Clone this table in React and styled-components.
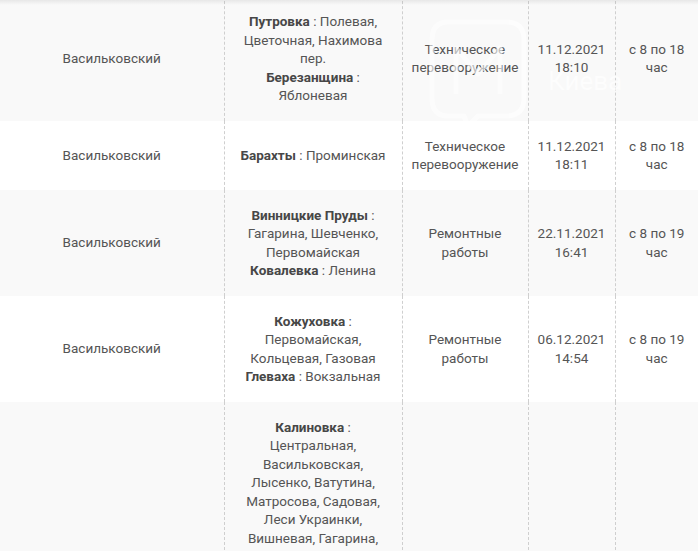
import React from 'react';
import styled, { createGlobalStyle } from 'styled-components';

const GlobalStyle = createGlobalStyle`
    html, body {
        margin: 0;
        padding: 0;
        background: #ffffff;
    }
    body {
        font-family: Roboto, "Liberation Sans", Arial, sans-serif;
        overflow: hidden;
    }
`

const rows = [
    {
        district: 'Васильковский',
        places: [
            { name: 'Путровка', streets: 'Полевая, Цветочная, Нахимова пер.' },
            { name: 'Березанщина', streets: 'Яблоневая' },
        ],
        reason: 'Техническое перевооружение',
        date: '11.12.2021 18:10',
        time: 'с 8 по 18 час',
    },
    {
        district: 'Васильковский',
        places: [{ name: 'Барахты', streets: 'Проминская' }],
        reason: 'Техническое перевооружение',
        date: '11.12.2021 18:11',
        time: 'с 8 по 18 час',
    },
    {
        district: 'Васильковский',
        places: [
            { name: 'Винницкие Пруды', streets: 'Гагарина, Шевченко, Первомайская' },
            { name: 'Ковалевка', streets: 'Ленина' },
        ],
        reason: 'Ремонтные работы',
        date: '22.11.2021 16:41',
        time: 'с 8 по 19 час',
    },
    {
        district: 'Васильковский',
        places: [
            { name: 'Кожуховка', streets: 'Первомайская, Кольцевая, Газовая' },
            { name: 'Глеваха', streets: 'Вокзальная' },
        ],
        reason: 'Ремонтные работы',
        date: '06.12.2021 14:54',
        time: 'с 8 по 19 час',
    },
    {
        district: 'Васильковский',
        places: [
            {
                name: 'Калиновка',
                streets:
                    'Центральная, Васильковская, Лысенко, Ватутина, Матросова, Садовая, Леси Украинки, Вишневая, Гагарина, Шевченко, Мира, Набережная, Лесная, Зелёная, Молодёжная, Садовый пер., Полевая, Весенняя, Луговая, Озёрная, Школьная, Победы, Степная, Киевская, Новая, Дачная, Солнечная, Короткая, Заречная, Подгорная, Ярославская, Весёлая',
            },
        ],
        reason: 'Ремонтные работы',
        date: '06.12.2021 15:02',
        time: 'с 8 по 19 час',
    },
];

function App() {
    return (
        <>
            <GlobalStyle />
            <Wrapper>
                <Table>
                    <colgroup>
                        <col style={{ width: 224 }} />
                        <col style={{ width: 178 }} />
                        <col style={{ width: 126 }} />
                        <col style={{ width: 87 }} />
                        <col style={{ width: 83 }} />
                    </colgroup>
                    <tbody>
                        {rows.map((r, i) => (
                            <Row key={i} $striped={i % 2 === 0}>
                                <Cell>{r.district}</Cell>
                                <Cell $pad="12px">
                                    {r.places.map((p) => (
                                        <Place key={p.name}>
                                            <b>{p.name}</b> : {p.streets}
                                        </Place>
                                    ))}
                                </Cell>
                                <Cell $pad="6px">{r.reason}</Cell>
                                <Cell $pad="6px">{r.date}</Cell>
                                <Cell $pad="6px">{r.time}</Cell>
                            </Row>
                        ))}
                    </tbody>
                </Table>

                <Watermark viewBox="0 0 210 110" aria-hidden="true">
                    <g fill="none" stroke="#ffffff" strokeWidth="5" strokeLinejoin="round" opacity="0.6">
                        <path d="M20 4 H78 Q96 4 96 22 V80 Q96 98 78 98 H50 L40 108 L36 98 H20 Q4 98 4 80 V22 Q4 4 20 4 Z" />
                        <path d="M28 76 V30 L50 56 L72 30 V76" />
                    </g>
                    <text x="120" y="72" fill="#ffffff" opacity="0.7" fontSize="26" fontFamily="Roboto, sans-serif">Киева</text>
                </Watermark>
                <TopShade />
            </Wrapper>
        </>
    )
}

export default App

const Wrapper = styled.div`
    position: relative;
    width: 698px;
    height: 551px;
    overflow: hidden;
`

const Table = styled.table`
    width: 698px;
    margin-top: -4px;
    border-collapse: collapse;
    table-layout: fixed;
    font-size: 13.5px;
    line-height: 18.5px;
    color: #555555;
`

const Row = styled.tr`
    background: ${props => props.$striped ? '#f9f9f9' : '#ffffff'};
`

const Cell = styled.td`
    padding: 16px ${props => props.$pad || '12px'};
    text-align: center;
    vertical-align: middle;
    border-left: 1px dashed #cfcfcf;

    &:first-child {
        border-left: none;
    }
`

const Place = styled.div`
    b {
        font-weight: 700;
        color: #474747;
    }
`

const Watermark = styled.svg`
    position: absolute;
    left: 428px;
    top: 18px;
    width: 210px;
    height: 110px;
    pointer-events: none;
`

const TopShade = styled.div`
    position: absolute;
    left: 0;
    right: 0;
    top: 0;
    height: 5px;
    background: linear-gradient(to bottom, rgba(0, 0, 0, 0.07), rgba(0, 0, 0, 0));
    pointer-events: none;
`
